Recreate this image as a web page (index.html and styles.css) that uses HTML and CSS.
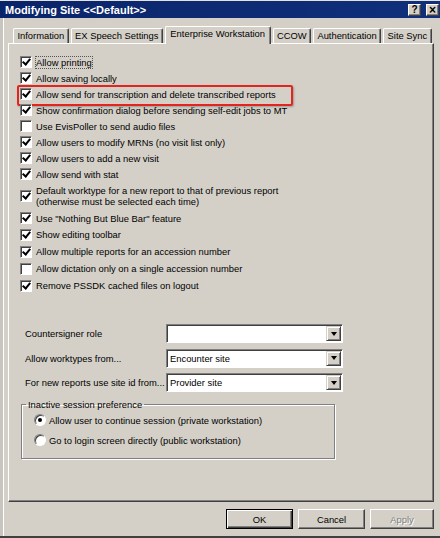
FILE: index.html
```html
<!DOCTYPE html>
<html lang="en">
<head>
  <meta charset="UTF-8" />
  <title>Modifying Site &lt;&lt;Default&gt;&gt;</title>
  <link rel="stylesheet" href="styles.css">
</head>
<body>
  <div class="window">
    <div class="titlebar">
      <span class="title">Modifying Site &lt;&lt;Default&gt;&gt;</span>
      <div class="title-btns">
        <span class="tbtn">?</span>
        <span class="tbtn close">×</span>
      </div>
    </div>

    <div class="content">
      <div class="tabs">
        <div class="tab">Information</div>
        <div class="tab">EX Speech Settings</div>
        <div class="tab active">Enterprise Workstation</div>
        <div class="tab">CCOW</div>
        <div class="tab">Authentication</div>
        <div class="tab">Site Sync</div>
      </div>

      <div class="panel">
        <ul class="checks">
          <li><span class="cb on"></span><span class="focus">Allow printing</span></li>
          <li><span class="cb on"></span>Allow saving locally</li>
          <li class="marked"><span class="cb on"></span>Allow send for transcription and delete transcribed reports</li>
          <li><span class="cb on"></span>Show confirmation dialog before sending self-edit jobs to MT</li>
          <li><span class="cb"></span>Use EvisPoller to send audio files</li>
          <li><span class="cb on"></span>Allow users to modify MRNs (no visit list only)</li>
          <li><span class="cb on"></span>Allow users to add a new visit</li>
          <li><span class="cb on"></span>Allow send with stat</li>
          <li class="two"><span class="cb on"></span><span>Default worktype for a new report to that of previous report<br>(otherwise must be selected each time)</span></li>
          <li><span class="cb on"></span>Use "Nothing But Blue Bar" feature</li>
          <li class="tall"><span class="cb on"></span>Show editing toolbar</li>
          <li class="tall"><span class="cb on"></span>Allow multiple reports for an accession number</li>
          <li class="tall"><span class="cb"></span>Allow dictation only on a single accession number</li>
          <li class="tall"><span class="cb on"></span>Remove PSSDK cached files on logout</li>
        </ul>

        <div class="fields">
          <div class="field">
            <label>Countersigner role</label>
            <div class="select"><span class="value"></span><span class="drop"></span></div>
          </div>
          <div class="field">
            <label>Allow worktypes from...</label>
            <div class="select"><span class="value">Encounter site</span><span class="drop"></span></div>
          </div>
          <div class="field">
            <label>For new reports use site id from...</label>
            <div class="select"><span class="value">Provider site</span><span class="drop"></span></div>
          </div>
        </div>

        <fieldset class="group">
          <legend>Inactive session preference</legend>
          <div class="radio-row"><span class="rb on"></span>Allow user to continue session (private workstation)</div>
          <div class="radio-row"><span class="rb"></span>Go to login screen directly (public workstation)</div>
        </fieldset>
      </div>

      <div class="buttons">
        <button class="btn default">OK</button>
        <button class="btn">Cancel</button>
        <button class="btn apply" disabled>Apply</button>
      </div>
    </div>
  </div>
</body>
</html>
```

FILE: styles.css
```css
* {
  box-sizing: border-box;
}

body {
  margin: 0;
  font-family: "Liberation Sans", Arial, sans-serif;
  font-size: 9.4px;
  color: #000;
  background: #d4d0c8;
}

.window {
  width: 440px;
  height: 538px;
  background: #d4d0c8;
  display: flex;
  flex-direction: column;
  border-bottom: 2px solid #404040;
}

/* title bar */
.titlebar {
  height: 18px;
  flex: none;
  background: linear-gradient(to right, #0a246a, #10307c);
  border-top: 1px solid #e4e2de;
  display: flex;
  align-items: center;
  justify-content: space-between;
  padding: 0 1px 0 5px;
}

.title {
  color: #fff;
  font-weight: bold;
  font-size: 11px;
}

.title-btns {
  display: flex;
  gap: 5px;
}

.tbtn {
  width: 13px;
  height: 12px;
  background: #d4d0c8;
  border: 1px solid;
  border-color: #fff #404040 #404040 #fff;
  box-shadow: inset -1px -1px #808080;
  font: bold 10px/10px "Liberation Sans", Arial, sans-serif;
  text-align: center;
}

.tbtn.close {
  font-size: 12px;
}

.content {
  flex: 1;
  display: flex;
  flex-direction: column;
  border-left: 3px solid;
  border-color: #c8c5be;
  box-shadow: inset 1px 0 #fff;
  padding: 8px 6px 7px 5px;
}

/* tabs */
.tabs {
  display: flex;
  align-items: flex-end;
  gap: 2px;
  padding-left: 5px;
  height: 17px;
  flex: none;
  position: relative;
  z-index: 1;
}

.tab {
  height: 15px;
  line-height: 13px;
  padding: 0 3.4px;
  border: 1px solid;
  border-bottom: none;
  border-color: #fff #404040 #fff #fff;
  box-shadow: inset -1px 0 #808080;
  border-radius: 2px 2px 0 0;
  white-space: nowrap;
}

.tab.active {
  height: 18px;
  line-height: 14px;
  padding: 0 4.5px;
  margin-bottom: -1px;
  background: #d4d0c8;
}

/* page panel */
.panel {
  flex: 1;
  border: 1px solid;
  border-color: #fff #404040 #404040 #fff;
  box-shadow: inset -1px -1px #808080;
  padding: 10px 10px 0 11px;
}

.checks {
  margin: 0;
  padding: 0;
  list-style: none;
}

.checks li {
  display: flex;
  align-items: center;
  gap: 4px;
  height: 16px;
  white-space: nowrap;
}

.checks li.tall {
  height: 17px;
}

.checks li.two {
  height: 28px;
  line-height: 11.5px;
}

.checks li.marked {
  position: relative;
}

.checks li.marked::before {
  content: "";
  position: absolute;
  left: -3px;
  top: -1px;
  width: 272px;
  height: 17px;
  border: 2px solid #e2261f;
  border-radius: 2px;
  box-shadow: 1px 1px 2px rgba(0, 0, 0, 0.25);
}

.cb {
  position: relative;
  flex: none;
  width: 12px;
  height: 12px;
  background: #fff;
  border: 1px solid;
  border-color: #808080 #fff #fff #808080;
  box-shadow: inset 1px 1px #404040;
}

.cb.on::after {
  content: "";
  position: absolute;
  left: 3px;
  top: 0px;
  width: 3px;
  height: 6px;
  border: solid #000;
  border-width: 0 2px 2px 0;
  transform: rotate(40deg);
}

.focus {
  outline: 1px dotted #555;
  outline-offset: 0;
}

/* dropdown fields */
.fields {
  margin-top: 30px;
  display: flex;
  flex-direction: column;
  gap: 5.5px;
}

.field {
  display: flex;
  align-items: center;
  height: 19px;
  padding-left: 5px;
}

.field label {
  width: 141px;
  white-space: nowrap;
}

.select {
  width: 177px;
  height: 19px;
  background: #fff;
  border: 1px solid;
  border-color: #808080 #fff #fff #808080;
  box-shadow: inset 1px 1px #404040;
  display: flex;
  padding: 1px;
}

.select .value {
  flex: 1;
  line-height: 15px;
  padding-left: 2px;
}

.select .drop {
  width: 15px;
  height: 15px;
  background: #d4d0c8;
  border: 1px solid;
  border-color: #d4d0c8 #404040 #404040 #d4d0c8;
  box-shadow: inset 1px 1px #fff, inset -1px -1px #808080;
  display: flex;
  align-items: center;
  justify-content: center;
}

.select .drop::after {
  content: "";
  border-style: solid;
  border-width: 4px 3.5px 0 3.5px;
  border-color: #000 transparent transparent transparent;
}

/* group box */
.group {
  margin: 7px 0 0 1px;
  width: 314px;
  padding: 0 4px 8px;
  border: 1px solid #808080;
  box-shadow: inset 1px 1px #fff, 1px 1px #fff;
}

.group legend {
  padding: 0 2px;
}

.radio-row {
  display: flex;
  align-items: center;
  gap: 3px;
  height: 20px;
  padding-left: 8px;
  white-space: nowrap;
}

.rb {
  position: relative;
  width: 12px;
  height: 12px;
  border-radius: 50%;
  background: #fff;
  border: 1px solid;
  border-color: #808080 #fff #fff #808080;
  box-shadow: inset 1px 1px #404040;
}

.rb.on::after {
  content: "";
  position: absolute;
  left: 3px;
  top: 3px;
  width: 4px;
  height: 4px;
  border-radius: 50%;
  background: #000;
}

/* dialog buttons */
.buttons {
  display: flex;
  justify-content: flex-end;
  gap: 5px;
  margin-top: 7px;
  height: 20px;
  flex: none;
}

.btn {
  width: 67px;
  height: 20px;
  font: inherit;
  color: #000;
  background: #d4d0c8;
  border: 1px solid;
  border-color: #fff #404040 #404040 #fff;
  box-shadow: inset -1px -1px #808080;
  padding: 0;
}

.btn.apply {
  width: 64px;
}

.btn.default {
  border: 1px solid #000;
  box-shadow: inset 1px 1px #fff, inset -1px -1px #404040, inset -2px -2px #808080;
}

.btn:disabled {
  color: #808080;
  text-shadow: 1px 1px #fff;
}
```
